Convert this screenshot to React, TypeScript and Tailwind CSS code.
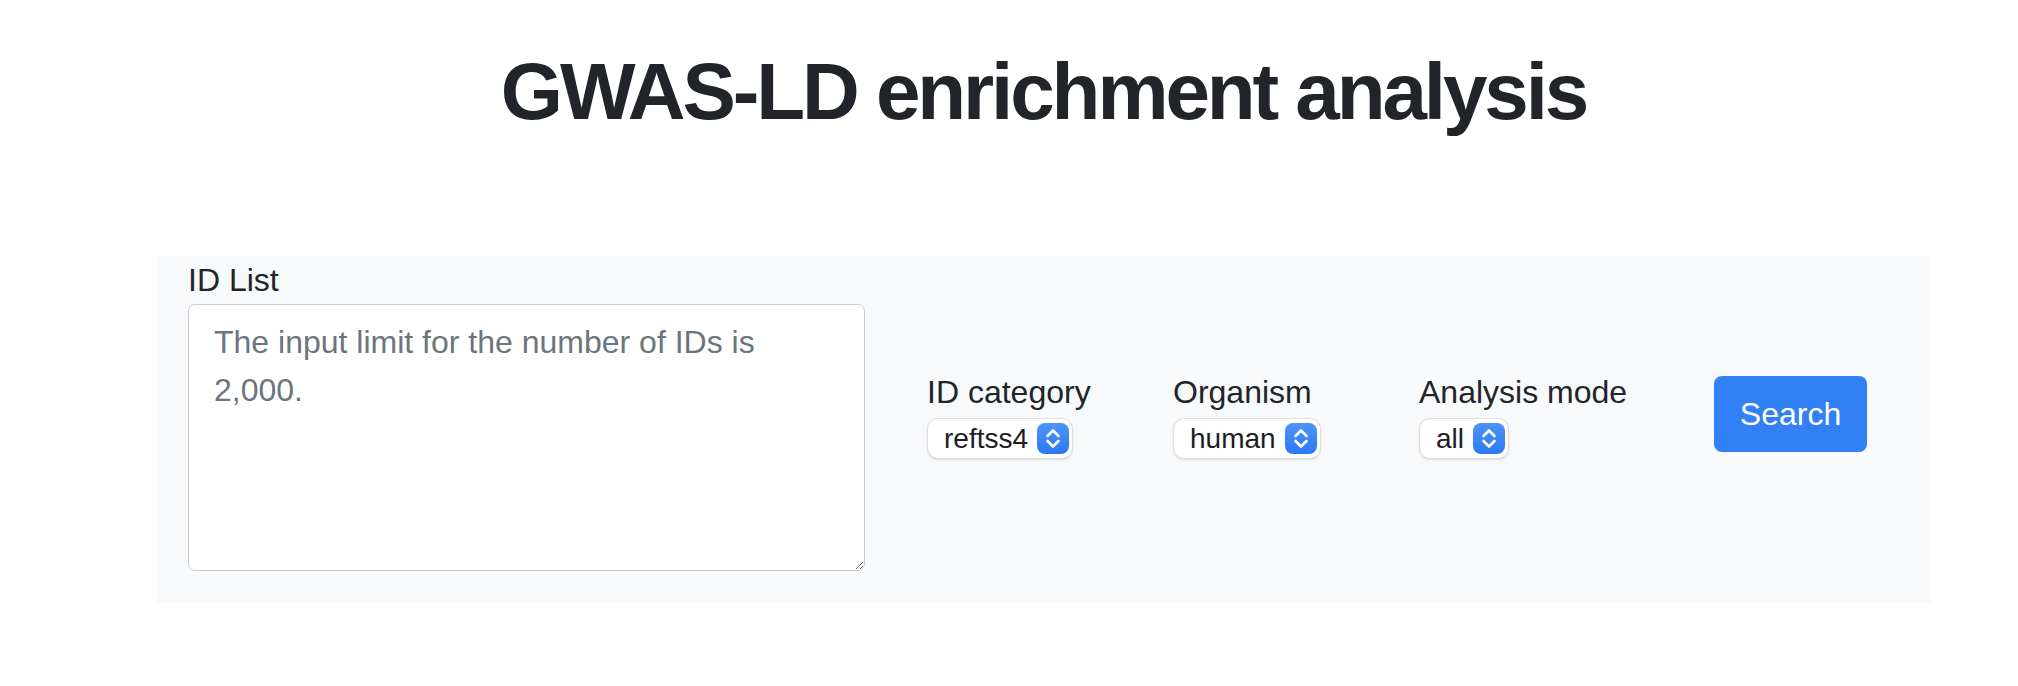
import React from 'react'

const font = { fontFamily: '"Liberation Sans", Arial, sans-serif' }

function Chevrons() {
  return (
    <svg width="32" height="31" viewBox="0 0 32 31" className="block">
      <defs>
        <linearGradient id="selgrad" x1="0" y1="0" x2="0" y2="1">
          <stop offset="0" stopColor="#4d93f8" />
          <stop offset="1" stopColor="#2c79f4" />
        </linearGradient>
      </defs>
      <rect x="0" y="0" width="32" height="31" rx="8" fill="url(#selgrad)" />
      <path d="M10.5 13 L16 7.5 L21.5 13" fill="none" stroke="#fff" strokeWidth="2.6" strokeLinecap="round" strokeLinejoin="round" />
      <path d="M10.5 18 L16 23.5 L21.5 18" fill="none" stroke="#fff" strokeWidth="2.6" strokeLinecap="round" strokeLinejoin="round" />
    </svg>
  )
}

function FakeSelect({ value }: { value: string }) {
  return (
    <div className="inline-flex items-center h-[41px] pl-[16px] pr-[3px] bg-white rounded-[11px] border border-[#dedede] shadow-[0_1px_2px_rgba(0,0,0,0.12)]">
      <span className="text-[28px] leading-none text-[#1d1d1f] mr-[9px]">{value}</span>
      <Chevrons />
    </div>
  )
}

function Field({ label, value }: { label: string; value: string }) {
  return (
    <div className="w-[246px] flex flex-col items-start">
      <label className="text-[32px] leading-[48px] text-[#212529] mb-[2px]">{label}</label>
      <FakeSelect value={value} />
    </div>
  )
}

export default function App() {
  return (
    <div className="w-[2018px] h-[686px] bg-white overflow-hidden" style={font}>
      <div className="pl-[157px] pr-[88px] pt-[44px]">
        <h1 className="text-center text-[80px] leading-[96px] font-bold tracking-[-3.1px] text-[#212529]">
          GWAS-LD enrichment analysis
        </h1>

        <div className="mt-[116px] bg-[#f8f9fa] flex items-center pl-[31px] pb-[32px]">
          {/* ID list */}
          <div className="w-[677px] flex flex-col">
            <label className="text-[32px] leading-[48px] text-[#212529]">ID List</label>
            <textarea
              className="w-[677px] h-[267px] bg-white border border-[#c9cdd2] rounded-[7px] pl-[25px] pr-[29px] pt-[13px] text-[32px] leading-[48px] text-[#212529] placeholder:text-[#6c757d] outline-none"
              style={font}
              placeholder="The input limit for the number of IDs is 2,000."
            />
          </div>

          <div className="ml-[62px] flex">
            <Field label="ID category" value="reftss4" />
            <Field label="Organism" value="human" />
            <Field label="Analysis mode" value="all" />
          </div>

          <button className="ml-[49px] w-[153px] h-[76px] rounded-[8px] bg-[#3280f6] text-white text-[32px] leading-none">
            Search
          </button>
        </div>
      </div>
    </div>
  )
}
